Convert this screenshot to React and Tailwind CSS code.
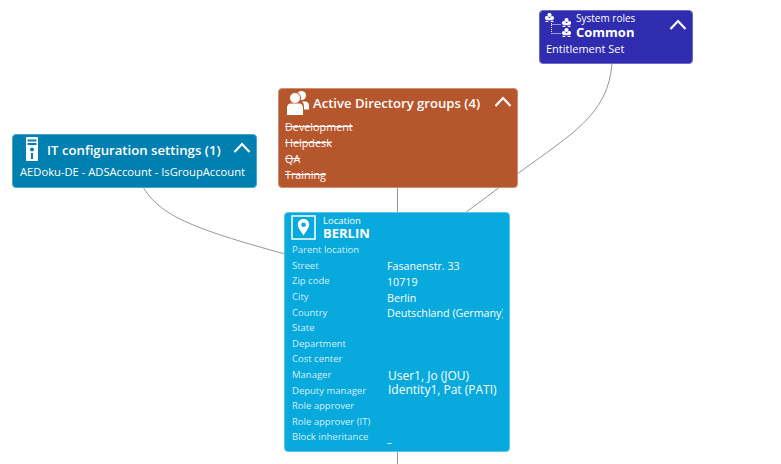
// App.jsx
// Location diagram: nodes sit on a free canvas, edges are drawn in one svg behind them.

const font = { fontFamily: '"Open Sans", "Noto Sans", sans-serif' };

const rows = [
  ["Parent location", ""],
  ["Street", "Fasanenstr. 33"],
  ["Zip code", "10719"],
  ["City", "Berlin"],
  ["Country", "Deutschland (Germany)"],
  ["State", ""],
  ["Department", ""],
  ["Cost center", ""],
  ["Manager", "User1, Jo (JOU)", "mt-[2px]"],
  ["Deputy manager", "Identity1, Pat (PATI)", "mb-[1px]"],
  ["Role approver", ""],
  ["Role approver (IT)", ""],
  ["Block inheritance", "_"],
];

function Chevron({ className }) {
  return (
    <svg width="18" height="11" viewBox="0 0 18 11" className={className} fill="none" stroke="white" strokeWidth="2.2">
      <path d="M1.5 10 L9 2 L16.5 10" />
    </svg>
  );
}

function Cluster({ x, y }) {
  return (
    <g transform={`translate(${x} ${y})`}>
      <circle cx="4.5" cy="2" r="2.1" />
      <circle cx="1.9" cy="5" r="2" />
      <circle cx="7.1" cy="5" r="2" />
      <path d="M0 9 q1.9 -3 3.8 0z M5.2 9 q1.9 -3 3.8 0z M2.6 5.8 q1.9 -1.6 3.8 0 v1.4 h-3.8z" />
    </g>
  );
}

function RolesIcon() {
  return (
    <svg width="26" height="25" viewBox="0 0 26 25" fill="white" className="shrink-0">
      <Cluster x={0} y={0} />
      <Cluster x={17} y={5} />
      <Cluster x={17} y={15} />
      <path d="M6.5 10 V20.5 M6.5 11.5 H16 M6.5 20.5 H16" stroke="white" strokeWidth="1" strokeDasharray="1 1" fill="none" />
    </svg>
  );
}

function GroupIcon() {
  return (
    <svg width="22" height="24" viewBox="0 0 22 24" fill="white" className="shrink-0">
      <circle cx="14.5" cy="4.5" r="4.5" />
      <path d="M17 18.5 V15 Q17 12 15 10.5 H18 Q22 10.5 22 15 V18.5z" />
      <circle cx="8" cy="7" r="5.5" stroke="#b5562d" strokeWidth="1" />
      <path d="M0 24 V17 Q0 12.5 4 12.5 H12 Q16 12.5 16 17 V24z" />
    </svg>
  );
}

function ServerIcon() {
  return (
    <svg width="12" height="24" viewBox="0 0 12 24" fill="white" className="shrink-0">
      <path fillRule="evenodd" d="M1 0 H11 Q12 0 12 1 V23 Q12 24 11 24 H1 Q0 24 0 23 V1 Q0 0 1 0z M1.5 2.5 V4.5 H10.5 V2.5z M1.5 6 V8 H10.5 V6z M6 10.5 a2 2 0 1 0 0 4 a2 2 0 1 0 0 -4z M5 16 V22 H7 V16z" />
    </svg>
  );
}

function PinIcon() {
  return (
    <svg width="25" height="25" viewBox="0 0 25 25" fill="none" className="shrink-0">
      <rect x="1" y="1" width="23" height="23" stroke="white" strokeWidth="1.5" />
      <path fillRule="evenodd" d="M12.5 4 C8.8 4 6.8 6.7 6.8 9.5 C6.8 13 10.5 17 12.5 20.5 C14.5 17 18.2 13 18.2 9.5 C18.2 6.7 16.2 4 12.5 4z M12.5 7.4 a2.3 2.3 0 1 1 0 4.6 a2.3 2.3 0 1 1 0 -4.6z" fill="white" />
    </svg>
  );
}

function SystemRoles() {
  return (
    <div className="absolute left-[539px] top-[10px] w-[154px] h-[54px] rounded-[4px] bg-[#2f2cb0] border border-[#6d6bc8] text-white">
      <div className="flex items-start pl-[5px] pt-[2px]">
        <RolesIcon />
        <div className="ml-[5px] -mt-[1px]">
          <div className="text-[10px] leading-[13px]">System roles</div>
          <div className="text-[13px] leading-[14px] font-bold">Common</div>
        </div>
      </div>
      <Chevron className="absolute right-[5px] top-[8px]" />
      <div className="absolute left-[6px] top-[30px] text-[11px] leading-[15px]">Entitlement Set</div>
    </div>
  );
}

function AdGroups() {
  return (
    <div className="absolute left-[278px] top-[88px] w-[240px] h-[100px] rounded-[4px] bg-[#b5562d] border border-[#d0906f] text-white">
      <div className="flex items-center pl-[8px] pt-[1px] h-[26px]">
        <GroupIcon />
        <div className="ml-[4px] text-[13.1px] font-semibold leading-[18px]">Active Directory groups (4)</div>
      </div>
      <Chevron className="absolute right-[5px] top-[7px]" />
      <div className="pl-[6px] pt-[4px] text-[10.8px] leading-[16px] line-through">
        <div>Development</div>
        <div>Helpdesk</div>
        <div>QA</div>
        <div>Training</div>
      </div>
    </div>
  );
}

function ItSettings() {
  return (
    <div className="absolute left-[12px] top-[134px] w-[245px] h-[54px] rounded-[4px] bg-[#0080b0] border border-[#4fa6c9] text-white">
      <div className="flex items-start pl-[13px] pt-[2px]">
        <ServerIcon />
        <div className="ml-[9px] mt-[1px] text-[13.2px] font-semibold leading-[24px]">IT configuration settings (1)</div>
      </div>
      <Chevron className="absolute right-[5px] top-[7px]" />
      <div className="pl-[7px] pt-[2px] text-[11.2px] leading-[15px] whitespace-nowrap">AEDoku-DE - ADSAccount - IsGroupAccount</div>
    </div>
  );
}

function LocationCard() {
  return (
    <div className="absolute left-[284px] top-[212px] w-[226px] h-[240px] rounded-[4px] bg-[#08a9dc] border border-[#5cc6e8] text-white">
      <div className="flex items-start pl-[6px] pt-[2px] h-[29px]">
        <PinIcon />
        <div className="ml-[7px]">
          <div className="text-[9.5px] leading-[12px]">Location</div>
          <div className="text-[13px] leading-[13px] font-bold">BERLIN</div>
        </div>
      </div>
      <div className="grid grid-cols-[95px_1fr] pl-[7px] auto-rows-[15.6px] items-center">
        {rows.map(([label, value, nudge]) => (
          <div key={label} className="contents">
            <div className="text-[9.5px] leading-[15px] text-[#d5eff8] whitespace-nowrap">{label}</div>
            {nudge ? (
              <div className={`text-[12px] font-medium leading-[15px] pl-[1px] w-[118px] overflow-hidden whitespace-nowrap ${nudge}`}>{value}</div>
            ) : (
              <div className="text-[10.7px] leading-[15px] mt-[3px] w-[116px] overflow-hidden whitespace-nowrap">{value}</div>
            )}
          </div>
        ))}
      </div>
    </div>
  );
}

export default function App() {
  return (
    <div className="relative w-[781px] h-[464px] bg-white overflow-hidden" style={font}>
      <svg className="absolute inset-0" width="781" height="464" fill="none" stroke="#8a8a8a" strokeWidth="0.9">
        <path d="M143 187 C160 215 190 228 285 254" />
        <path d="M397.5 187 V213" />
        <path d="M612 64 C608 115 570 135 520 172 L465 213" />
        <path d="M397.5 451 V464" />
      </svg>
      <SystemRoles />
      <AdGroups />
      <ItSettings />
      <LocationCard />
    </div>
  );
}
